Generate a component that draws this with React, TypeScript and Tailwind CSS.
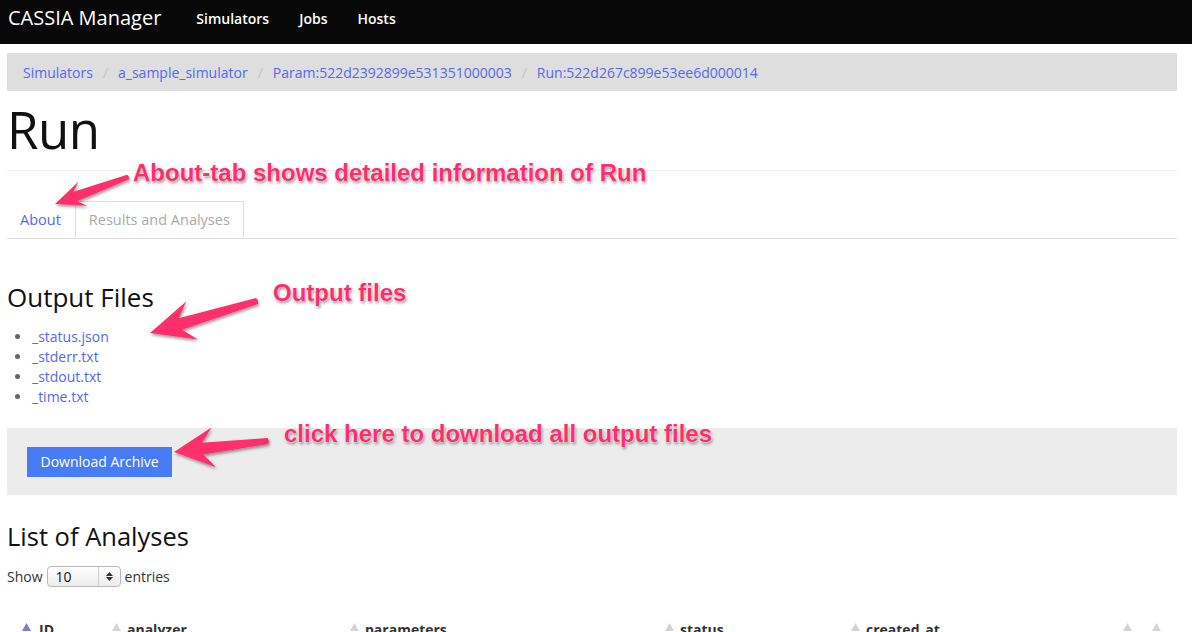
import React from 'react';

type Pt = [number, number];

// skitch-style arrow: tapered shaft with a swept head
const arrowPoints = (tip: Pt, tail: Pt, headLen: number, headW: number, neckW: number, tailW: number) => {
  const dx = tail[0] - tip[0];
  const dy = tail[1] - tip[1];
  const len = Math.hypot(dx, dy);
  const ux = dx / len;
  const uy = dy / len;
  const nx = -uy;
  const ny = ux;
  const p = (a: number, b: number) => `${(tip[0] + ux * a + nx * b).toFixed(1)},${(tip[1] + uy * a + ny * b).toFixed(1)}`;
  return [
    p(0, 0),
    p(headLen, headW),
    p(headLen * 0.72, neckW),
    p(len, tailW),
    p(len + 1, 0),
    p(len, -tailW),
    p(headLen * 0.72, -neckW),
    p(headLen, -headW),
  ].join(' ');
};

const SortArrow = ({ active }: { active?: boolean }) => (
  <svg width="9" height="8" viewBox="0 0 9 8" className="shrink-0 -mt-[6px]">
    <polygon points="4.5,0 9,8 0,8" fill={active ? '#7a7ad8' : '#d4d4d4'} />
  </svg>
);

const crumbs = ['Simulators', 'a_sample_simulator', 'Param:522d2392899e531351000003', 'Run:522d267c899e53ee6d000014'];
const files = ['_status.json', '_stderr.txt', '_stdout.txt', '_time.txt'];

const columns = [
  { label: 'ID', w: 'w-[90px]', active: true, gap: 'gap-[8px]' },
  { label: 'analyzer', w: 'w-[238px]', gap: 'gap-[6px]' },
  { label: 'parameters', w: 'w-[315px]', gap: 'gap-[6px]' },
  { label: 'status', w: 'w-[186px]', gap: 'gap-[6px]' },
  { label: 'created_at', w: 'w-[272px]', gap: 'gap-[6px]' },
  { label: '', w: 'w-[29px]', gap: 'gap-[6px]' },
  { label: '', w: 'w-[29px]', gap: 'gap-[6px]' },
];

const noteClass =
  "absolute font-['Liberation_Sans',Arial,sans-serif] font-bold text-[24px] leading-[28px] text-[#ff2d6c] whitespace-nowrap [text-shadow:0_0_1px_#fff,0_0_2px_#fff,1px_2px_3px_rgba(0,0,0,0.45)]";

export default function App() {
  return (
    <div className="relative w-[1192px] h-[632px] overflow-hidden bg-white font-['Open_Sans',sans-serif] text-[14px] text-[#111]">
      {/* Navbar */}
      <nav className="h-[44px] bg-[#080808] flex items-center pl-[8px] pb-[8px]">
        <span className="text-white text-[20px] leading-none">CASSIA Manager</span>
        <div className="flex ml-[20px]">
          {['Simulators', 'Jobs', 'Hosts'].map((item) => (
            <a key={item} className="px-[15px] text-white font-semibold text-[14px]">
              {item}
            </a>
          ))}
        </div>
      </nav>

      <div className="ml-[7px] w-[1170px]">
        {/* Breadcrumb */}
        <div className="mt-[9px] h-[38px] bg-[#dedede] flex items-center px-[16px]">
          {crumbs.map((c, i) => (
            <React.Fragment key={c}>
              {i > 0 && <span className="px-[10px] text-[#c4c4c4]">/</span>}
              <a className="text-[#5468f5]">{c}</a>
            </React.Fragment>
          ))}
        </div>

        {/* Page header */}
        <div className="border-b border-[#eeeeee] pb-[12px]">
          <h1 className="mt-[10px] text-[51px] leading-[57px] font-normal tracking-[-0.5px]">Run</h1>
        </div>

        {/* Tabs */}
        <div className="mt-[31px] flex border-b border-[#dddddd] h-[37px] text-[14.5px]">
          <a className="px-[13px] h-[36px] flex items-center text-[#5468f5] mr-[1px]">About</a>
          <a className="px-[13px] h-[37px] -mt-px -mb-px flex items-center text-[#aaaaaa] border border-[#dddddd] border-b-white bg-white">
            Results and Analyses
          </a>
        </div>

        {/* Output files */}
        <h2 className="mt-[44px] text-[26px] leading-[28px] font-normal">Output Files</h2>
        <ul className="mt-[16px] list-disc pl-[25px] marker:text-[#666]">
          {files.map((f) => (
            <li key={f} className="leading-[20px]">
              <a className="text-[#5468f5]">{f}</a>
            </li>
          ))}
        </ul>

        {/* Well */}
        <div className="mt-[21px] h-[67px] bg-[#ececec] flex items-center px-[20px]">
          <button className="h-[30px] px-[13.5px] bg-[#477cf6] text-white text-[14px] leading-none">Download Archive</button>
        </div>

        {/* Analyses */}
        <h2 className="mt-[27px] text-[25.5px] leading-[28px] font-normal">List of Analyses</h2>
        <div className="mt-[16px] flex items-center gap-[4px] text-[14px] text-[#333]">
          <span>Show</span>
          <div className="w-[74px] h-[21px] rounded-[4px] border border-[#b9b9b9] bg-gradient-to-b from-white to-[#ececec] flex items-center">
            <span className="flex-1 pl-[8px] text-[14px] leading-none text-[#111]">10</span>
            <div className="w-[22px] h-full border-l border-[#cfcfcf] flex flex-col items-center justify-center gap-[1px]">
              <svg width="7" height="4" viewBox="0 0 7 4">
                <polygon points="3.5,0 7,4 0,4" fill="#333" />
              </svg>
              <svg width="7" height="4" viewBox="0 0 7 4">
                <polygon points="0,0 7,0 3.5,4" fill="#333" />
              </svg>
            </div>
          </div>
          <span>entries</span>
        </div>

        {/* Table header */}
        <div className="mt-[33px] flex pl-[15px]">
          {columns.map((c, i) => (
            <div key={i} className={`${c.w} ${c.gap} shrink-0 flex items-center font-bold text-[#333] leading-[20px]`}>
              <SortArrow active={c.active} />
              {c.label && <span>{c.label}</span>}
            </div>
          ))}
        </div>
      </div>

      {/* Annotations */}
      <svg className="absolute inset-0 pointer-events-none" width="1192" height="632">
        <defs>
          <filter id="arrowShadow" x="-20%" y="-20%" width="140%" height="140%">
            <feDropShadow dx="1" dy="2" stdDeviation="1.5" floodColor="#000" floodOpacity="0.4" />
          </filter>
        </defs>
        <g fill="#ff2d6c" filter="url(#arrowShadow)">
          <polygon points={arrowPoints([55, 204], [128, 177], 30, 13, 5, 2.5)} />
          <polygon points={arrowPoints([150, 333], [257, 301], 44, 20, 6, 3)} />
          <polygon points={arrowPoints([174, 452], [268, 441], 40, 20, 6, 3)} />
        </g>
      </svg>
      <span className={`${noteClass} left-[133px] top-[159px]`}>About-tab shows detailed information of Run</span>
      <span className={`${noteClass} left-[273px] top-[279px]`}>Output files</span>
      <span className={`${noteClass} left-[284px] top-[420px]`}>click here to download all output files</span>
    </div>
  );
}
